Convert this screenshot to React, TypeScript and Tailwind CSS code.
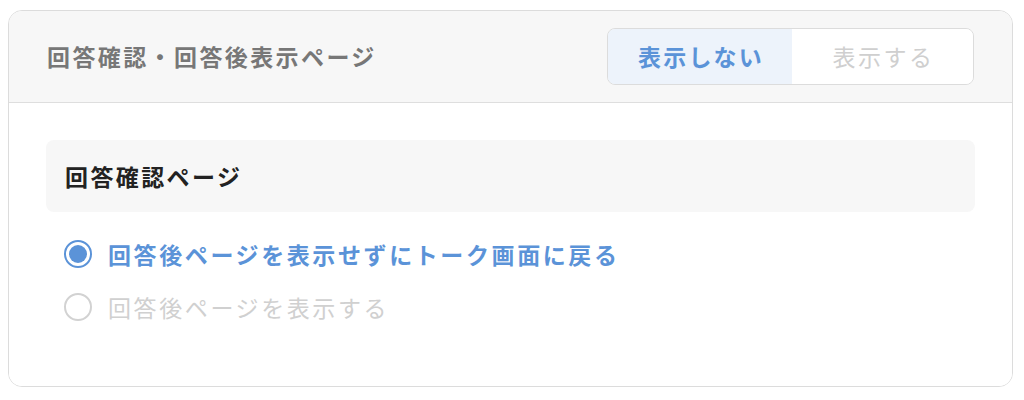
import React from "react";

export default function App() {
  const font = { fontFamily: '"Noto Sans CJK JP", "Noto Sans", sans-serif' };
  return (
    <div className="w-[1024px] h-[400px] bg-white pt-[10px] pl-[8px]" style={font}>
      <div className="w-[1005px] h-[377px] border border-[#dcdcdc] rounded-[14px] overflow-hidden flex flex-col">
        <div className="h-[92px] shrink-0 bg-[#f7f7f7] border-b border-[#dedede] flex items-center justify-between pl-[38px] pr-[38px]">
          <div className="text-[23px] font-bold text-[#777777] tracking-[2.4px]">回答確認・回答後表示ページ</div>
          <div className="flex h-[57px] w-[367px] border border-[#dcdcdc] rounded-[8px] overflow-hidden -mt-[1px]">
            <div className="w-[184px] bg-[#edf3fb] flex items-center justify-center text-[23px] font-bold text-[#5b93d8] tracking-[2.2px] pl-[2px]">表示しない</div>
            <div className="flex-1 bg-white flex items-center justify-center text-[23px] text-[#cfcfcf] tracking-[2.5px] pl-[2px]">表示する</div>
          </div>
        </div>
        <div className="flex-1 bg-white pt-[37px] px-[37px]">
          <div className="h-[72px] bg-[#f7f7f7] rounded-[8px] flex items-center pl-[19px] text-[23px] font-bold text-[#222] tracking-[2.4px]">回答確認ページ</div>
          <div className="pl-[18px] pt-[28px] flex flex-col gap-[25px]">
            <div className="flex items-center gap-[16px] h-[28px]">
              <div className="w-[28px] h-[28px] rounded-full border-[2px] border-[#5b93d8] flex items-center justify-center">
                <div className="w-[18px] h-[18px] rounded-full bg-[#5b93d8]" />
              </div>
              <div className="text-[23px] font-bold text-[#5b93d8] tracking-[2.6px]">回答後ページを表示せずにトーク画面に戻る</div>
            </div>
            <div className="flex items-center gap-[16px] h-[28px]">
              <div className="w-[28px] h-[28px] rounded-full border-[2px] border-[#d2d2d2]" />
              <div className="text-[23px] text-[#d0d0d0] tracking-[2.6px]">回答後ページを表示する</div>
            </div>
          </div>
        </div>
      </div>
    </div>
  );
}
